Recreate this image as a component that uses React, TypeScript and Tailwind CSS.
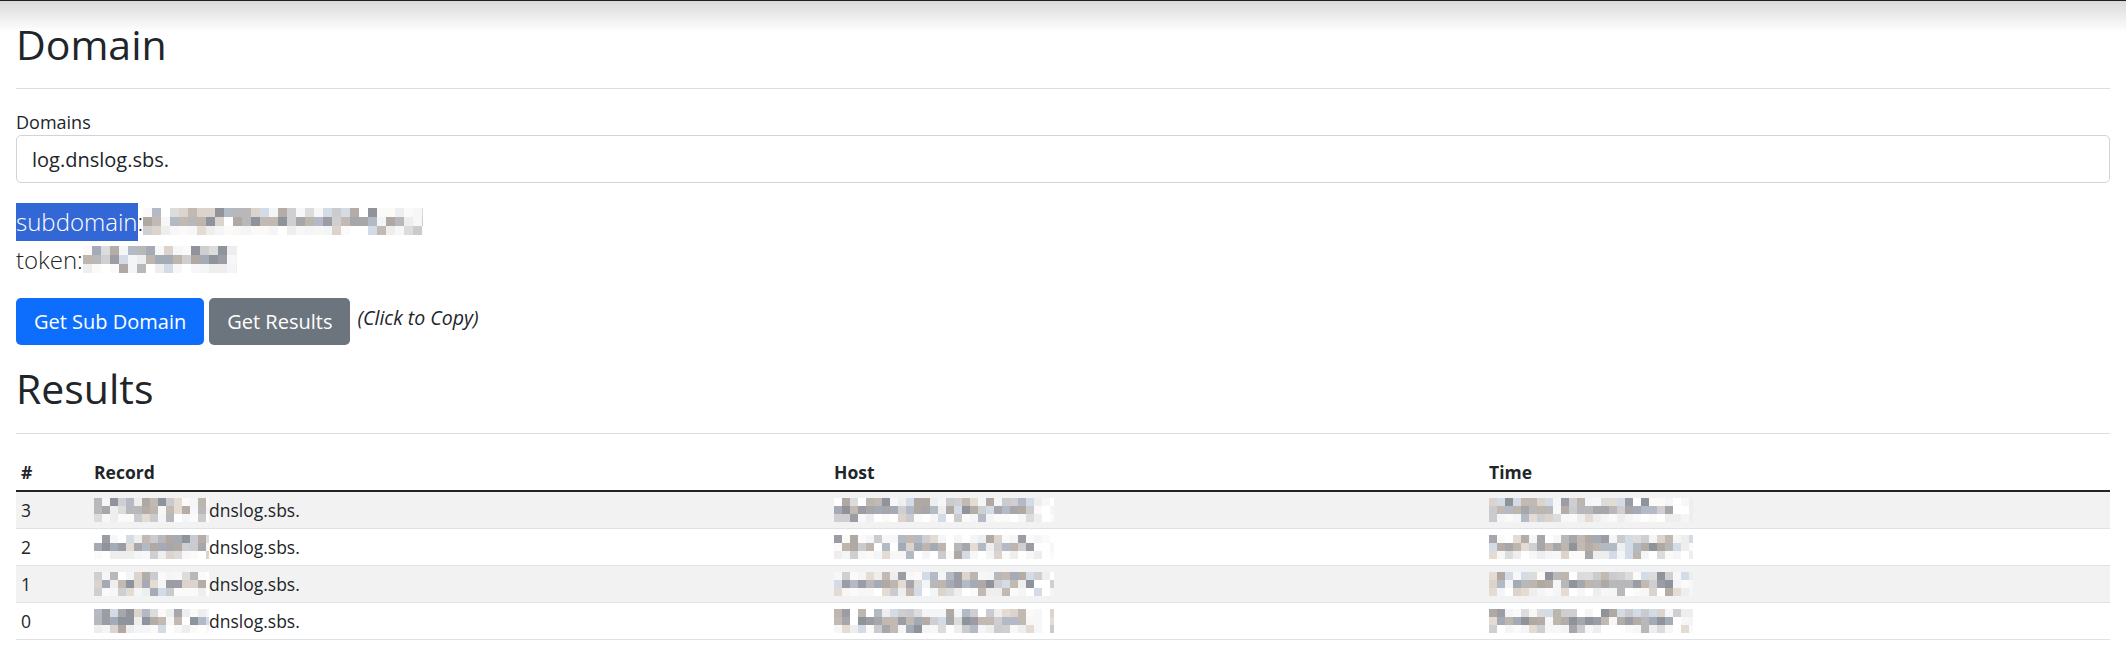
import React from 'react';

// redacted bits of the screenshot are drawn as a pixel mosaic
const DARK = ['#a7a7ab', '#b4aca6', '#9c9ca4', '#b3bac6', '#bdb6ae', '#a4abb6', '#b0a9a3', '#8f939b', '#b8b8bb', '#c2bab2'];
const LIGHT = ['#cfcfd2', '#dcd4cc', '#d3dbe6', '#dcdcdc', '#c9cbcf', '#e4dcd3'];
const PALE = ['#ffffff', '#f7f7f7', '#eeeeef', '#f3f5f7', '#fbfaf8'];

const makeRand = (seed: number) => {
  let s = seed;
  return () => {
    s = (s * 9301 + 49297) % 233280;
    return s / 233280;
  };
};

const Mosaic = ({ width, height, seed, block = 8 }: { width: number; height: number; seed: number; block?: number }) => {
  const rand = makeRand(seed);
  const pick = (arr: string[]) => arr[Math.floor(rand() * arr.length)];
  const cols = Math.ceil(width / block);
  const rows = Math.ceil(height / block);
  const cells: React.ReactNode[] = [];
  for (let y = 0; y < rows; y++) {
    for (let x = 0; x < cols; x++) {
      const tail = x > cols * 0.88;
      const v = rand();
      let c: string;
      if (tail) c = v < 0.2 ? pick(LIGHT) : pick(PALE);
      else if (y === rows - 1) c = v < 0.25 ? pick(LIGHT) : v < 0.35 ? pick(DARK) : pick(PALE);
      else if (y === 0) c = v < 0.35 ? pick(DARK) : v < 0.65 ? pick(LIGHT) : pick(PALE);
      else c = v < 0.7 ? pick(DARK) : v < 0.9 ? pick(LIGHT) : pick(PALE);
      cells.push(<rect key={`${x}-${y}`} x={x * block} y={y * block} width={block} height={block} fill={c} />);
    }
  }
  return (
    <svg width={width} height={height} viewBox={`0 0 ${width} ${height}`} className="block shrink-0" shapeRendering="crispEdges">
      {cells}
    </svg>
  );
};

const rows = [3, 2, 1, 0];

const App = () => {
  return (
    <div className="relative min-h-screen bg-white text-[#212529] font-['Open_Sans',sans-serif]">
      {/* browser chrome shadow on top */}
      <div className="pointer-events-none absolute inset-x-0 top-0 h-[32px] border-t border-[#202020] bg-gradient-to-b from-[#dadada] to-white/0" />

      <div className="px-[16px] pt-[20px]">
        <h1 className="text-[41px] leading-[49px] font-normal">Domain</h1>
        <hr className="mt-[19px] mb-[20px] border-t border-[#dedede]" />

        <label className="block text-[18px] leading-[26px]">Domains</label>
        <input
          readOnly
          defaultValue="log.dnslog.sbs."
          className="block w-full h-[48px] px-[15px] text-[20px] border border-[#ced4da] rounded-[5px] bg-white text-[#212529] outline-none"
        />

        <div className="mt-[20px] text-[24px] leading-[37.5px] font-light">
          <div className="flex items-center">
            <span className="inline-block bg-[#3367d6] text-white">subdomain</span>
            <span>:</span>
            <Mosaic width={280} height={27} seed={17} block={9} />
          </div>
          <div className="flex items-center">
            <span>token:</span>
            <Mosaic width={154} height={27} seed={41} block={9} />
          </div>
        </div>

        <div className="mt-[20px] flex gap-[5px]">
          <button className="h-[47px] px-[18px] rounded-[5px] bg-[#0d6efd] text-white text-[20px]">Get Sub Domain</button>
          <button className="h-[47px] px-[18px] rounded-[5px] bg-[#6c757d] text-white text-[20px]">Get Results</button>
          <span className="self-start mt-[6px] ml-[2px] text-[19.5px] leading-[28px] italic">(Click to Copy)</span>
        </div>

        <h2 className="mt-[19px] text-[41px] leading-[49px] font-normal">Results</h2>
        <hr className="mt-[20px] mb-[20px] border-t border-[#dedede]" />

        <table className="w-full border-collapse text-[17.5px] leading-[26px]">
          <thead>
            <tr className="border-b-2 border-[#212529] text-left">
              <th className="w-[73px] px-[5px] py-[5px] font-bold">#</th>
              <th className="w-[740px] px-[5px] py-[5px] font-bold">Record</th>
              <th className="w-[655px] px-[5px] py-[5px] font-bold">Host</th>
              <th className="px-[5px] py-[5px] font-bold">Time</th>
            </tr>
          </thead>
          <tbody>
            {rows.map((n, i) => (
              <tr key={n} className={`border-b border-[#dee2e6] ${i % 2 === 0 ? 'bg-[#f2f2f2]' : 'bg-white'}`}>
                <td className="px-[5px] py-[5px] align-middle">{n}</td>
                <td className="px-[5px] py-[5px] align-middle">
                  <div className="flex h-[26px] items-center">
                    <Mosaic width={115} height={24} seed={100 + n * 7} />
                    <span>dnslog.sbs.</span>
                  </div>
                </td>
                <td className="px-[5px] py-[5px] align-middle">
                  <div className="flex h-[26px] items-center">
                    <Mosaic width={220} height={24} seed={300 + n * 13} />
                  </div>
                </td>
                <td className="px-[5px] py-[5px] align-middle">
                  <div className="flex h-[26px] items-center">
                    <Mosaic width={204} height={24} seed={500 + n * 11} />
                  </div>
                </td>
              </tr>
            ))}
          </tbody>
        </table>
      </div>
    </div>
  );
};

export default App;
